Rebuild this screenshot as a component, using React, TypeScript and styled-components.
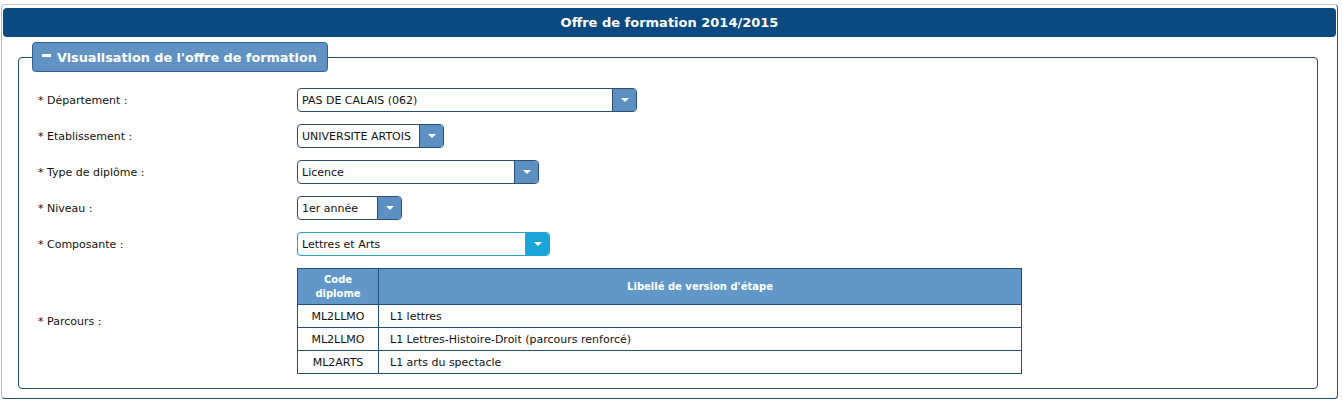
import React from "react";
import styled, { createGlobalStyle } from "styled-components";

const Global = createGlobalStyle`
  html, body { margin: 0; padding: 0; background: #ffffff; }
  body { font-family: "DejaVu Sans", Verdana, sans-serif; color: #111; }
`;

const Page = styled.div`
  padding: 4px 4px 0 1px;
`;

const Panel = styled.div`
  width: 1333px;
  border: 1px solid #1f4e79;
  border-top-color: #b9c9d8;
  border-left-color: #a9bccd;
  border-radius: 4px;
  padding: 2px 1px 9px 1px;
`;

const TitleBar = styled.div`
  height: 29px;
  margin-top: 1px;
  background: #0b4a80;
  border-radius: 4px;
  color: #fff;
  font-weight: bold;
  font-size: 13px;
  display: flex;
  align-items: center;
  justify-content: center;
`;

const Fieldset = styled.fieldset`
  margin: 5px 18px 0 15px;
  padding: 0;
  border: 1px solid #1f4e6e;
  border-radius: 4px;
  min-width: 0;
`;

const Legend = styled.legend`
  margin-left: 13px;
  padding: 0 10px 0 9px;
  height: 28px;
  background: #6093c4;
  border: 1px solid #2f5f8c;
  border-radius: 4px;
  color: #fff;
  font-weight: bold;
  font-size: 12.8px;
  display: flex;
  align-items: center;
  gap: 6px;
`;

const Minus = styled.span`
  display: inline-block;
  width: 9px;
  height: 3px;
  background: #fff;
  margin-top: -3px;
`;

const Form = styled.div`
  display: grid;
  grid-template-columns: 259px 1fr;
  padding: 10px 19px 8px 19px;
`;

const Label = styled.div`
  font-size: 11px;
  display: flex;
  align-items: center;
  min-height: 36px;
`;

const Field = styled.div`
  display: flex;
  align-items: center;
  min-height: 36px;
`;

const Select = styled.div<{ $w: number; $focus?: boolean }>`
  width: ${(p) => p.$w}px;
  height: 24px;
  box-sizing: border-box;
  border: 1px solid ${(p) => (p.$focus ? "#23a3d6" : "#2b4f72")};
  border-radius: 4px;
  display: flex;
  overflow: hidden;
  font-size: 11px;
`;

const SelectValue = styled.div`
  flex: 1;
  display: flex;
  align-items: center;
  padding-left: 4px;
  white-space: nowrap;
`;

const Arrow = styled.div<{ $focus?: boolean }>`
  width: 23px;
  background: ${(p) => (p.$focus ? "#1aa6d9" : "#5c8fc2")};
  border-left: 1px solid ${(p) => (p.$focus ? "#23a3d6" : "#2b4f72")};
  display: flex;
  align-items: center;
  justify-content: center;
  &::after {
    content: "";
    border-left: 4px solid transparent;
    border-right: 4px solid transparent;
    border-top: 4px solid #fff;
  }
`;

const Table = styled.table`
  border-collapse: collapse;
  width: 725px;
  margin: 6px 0;
  font-size: 11px;
  & th, & td {
    border: 1px solid #1f4e79;
  }
`;

const Th = styled.th<{ $narrow?: boolean }>`
  background: #6198c9;
  color: #fff;
  font-weight: bold;
  font-size: 10px;
  height: 35px;
  padding: 0;
  line-height: 14px;
  width: ${(p) => (p.$narrow ? "80px" : "auto")};
`;

const Td = styled.td<{ $code?: boolean }>`
  height: 22px;
  padding: 0 ${(p) => (p.$code ? "0" : "11px")};
  text-align: ${(p) => (p.$code ? "center" : "left")};
`;

type Sel = { label: string; value: string; w: number; focus?: boolean };

const selects: Sel[] = [
  { label: "* Département :", value: "PAS DE CALAIS (062)", w: 340 },
  { label: "* Etablissement :", value: "UNIVERSITE ARTOIS", w: 147 },
  { label: "* Type de diplôme :", value: "Licence", w: 242 },
  { label: "* Niveau :", value: "1er année", w: 105 },
  { label: "* Composante :", value: "Lettres et Arts", w: 253, focus: true },
];

const rows = [
  ["ML2LLMO", "L1 lettres"],
  ["ML2LLMO", "L1 Lettres-Histoire-Droit (parcours renforcé)"],
  ["ML2ARTS", "L1 arts du spectacle"],
];

export default function App() {
  return (
    <>
      <Global />
      <Page>
        <Panel>
          <TitleBar>Offre de formation 2014/2015</TitleBar>
          <Fieldset>
            <Legend>
              <Minus />
              Visualisation de l'offre de formation
            </Legend>
            <Form>
              {selects.map((s) => (
                <React.Fragment key={s.label}>
                  <Label>{s.label}</Label>
                  <Field>
                    <Select $w={s.w} $focus={s.focus}>
                      <SelectValue>{s.value}</SelectValue>
                      <Arrow $focus={s.focus} />
                    </Select>
                  </Field>
                </React.Fragment>
              ))}
              <Label>* Parcours :</Label>
              <Field>
                <Table>
                  <thead>
                    <tr>
                      <Th $narrow>
                        Code
                        <br />
                        diplome
                      </Th>
                      <Th>Libellé de version d'étape</Th>
                    </tr>
                  </thead>
                  <tbody>
                    {rows.map((r, i) => (
                      <tr key={i}>
                        <Td $code>{r[0]}</Td>
                        <Td>{r[1]}</Td>
                      </tr>
                    ))}
                  </tbody>
                </Table>
              </Field>
            </Form>
          </Fieldset>
        </Panel>
      </Page>
    </>
  );
}
